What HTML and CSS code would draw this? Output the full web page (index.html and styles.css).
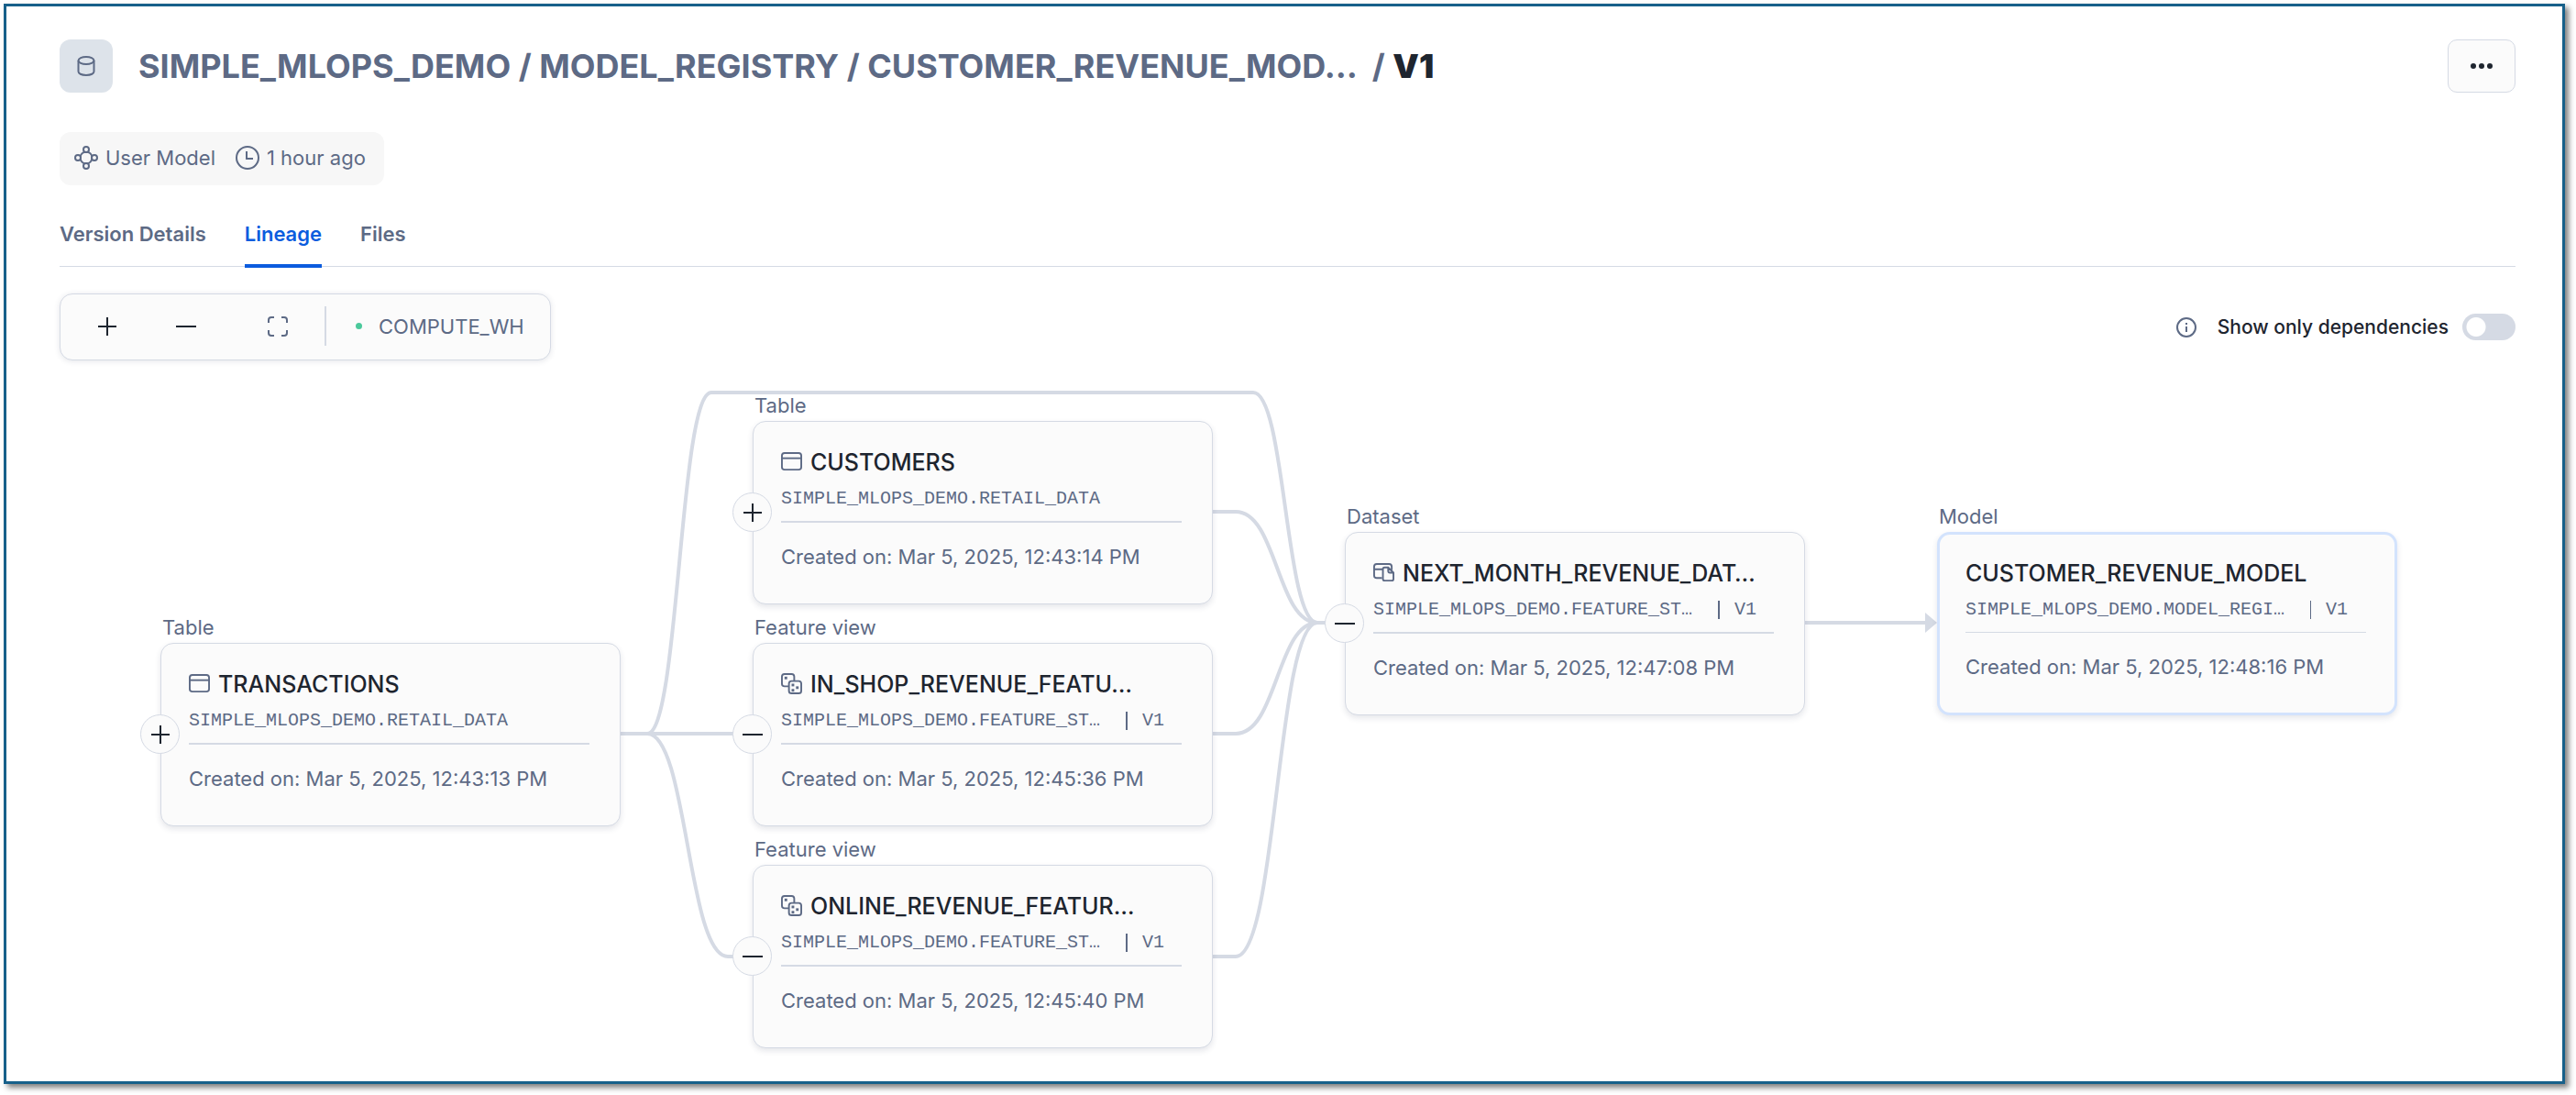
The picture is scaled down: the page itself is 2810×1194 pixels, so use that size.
FILE: index.html
```html
<!DOCTYPE html>
<html lang="en">
<head>
<meta charset="utf-8">
<title>Model registry - Lineage</title>
<link rel="stylesheet" href="styles.css">
</head>
<body>
<svg class="sprite" aria-hidden="true">
  <symbol id="i-table" viewBox="0 0 24 24"><rect x="1" y="2" width="22" height="19" rx="3"/><path d="M1 8h22"/></symbol>
  <symbol id="i-feature" viewBox="0 0 24 24"><path d="M9 15H4a3 3 0 0 1-3-3V4a3 3 0 0 1 3-3h8a3 3 0 0 1 3 3v5"/><rect x="9" y="9" width="14" height="14" rx="3"/><g class="solid"><rect x="4" y="4" width="3" height="3"/><rect x="12" y="12" width="3" height="3"/><rect x="17" y="15" width="3" height="3"/><rect x="12" y="18" width="3" height="3"/></g></symbol>
  <symbol id="i-dataset" viewBox="0 0 24 24"><path d="M10 18H4a3 3 0 0 1-3-3V5a3 3 0 0 1 3-3h14a3 3 0 0 1 3 3v4M1 8h10"/><path d="M13 6h4l6 6v7a2 2 0 0 1-2 2h-8a2 2 0 0 1-2-2V8a2 2 0 0 1 2-2zM17 6v4a2 2 0 0 0 2 2h4"/></symbol>
  <symbol id="i-plus" viewBox="0 0 24 24"><path d="M12 2v20M2 12h20"/></symbol>
  <symbol id="i-minus" viewBox="0 0 24 24"><path d="M1 12h22"/></symbol>
</svg>
<main class="frame">
  <header class="header">
    <span class="db-badge"><svg class="icon" viewBox="0 0 24 24"><ellipse cx="12" cy="6" rx="8.5" ry="4"/><path d="M3.500 6v12c0 2 3 4 8.500 4s8.500-2 8.500-4V6"/></svg></span>
    <h1 class="title"><span>SIMPLE_MLOPS_DEMO / MODEL_REGISTRY / CUSTOMER_REVENUE_MOD…</span><span>/ <b>V1</b></span></h1>
    <button class="more" type="button" aria-label="More actions"><svg viewBox="0 0 24 24"><circle cx="3" cy="12" r="3"/><circle cx="12" cy="12" r="3"/><circle cx="21" cy="12" r="3"/></svg></button>
  </header>
  <div class="meta">
    <span class="meta-item"><svg class="icon model" viewBox="0 0 26 26"><circle cx="13" cy="13" r="6.500"/><circle cx="13" cy="4" r="3"/><circle cx="13" cy="22" r="3"/><circle cx="4" cy="13" r="3"/><circle cx="22" cy="13" r="3"/></svg>User Model</span>
    <span class="meta-item"><svg class="icon" viewBox="0 0 26 26"><circle cx="13" cy="13" r="12"/><path d="M12 6v8h7"/></svg>1 hour ago</span>
  </div>
  <nav class="tabs">
    <a href="#details">Version Details</a>
    <a href="#lineage" class="active" aria-current="page">Lineage</a>
    <a href="#files">Files</a>
  </nav>
  <div class="controls">
    <div class="toolbar">
      <button type="button" aria-label="Zoom in"><svg class="icon"><use href="#i-plus"/></svg></button>
      <button type="button" aria-label="Zoom out"><svg class="icon"><use href="#i-minus"/></svg></button>
      <button type="button" class="fit" aria-label="Fit to screen"><svg class="icon" viewBox="0 0 24 24"><path d="M2 8V5a3 3 0 0 1 3-3h3M16 2h3a3 3 0 0 1 3 3v3M22 16v3a3 3 0 0 1-3 3h-3M8 22H5a3 3 0 0 1-3-3v-3"/></svg></button>
      <button type="button" class="warehouse"><i></i>COMPUTE_WH</button>
    </div>
    <label class="deps"><svg class="icon" viewBox="0 0 24 24"><circle cx="12" cy="12" r="10"/><path d="M12 11v6M12 7v2"/></svg>Show only dependencies<input type="checkbox" role="switch"></label>
  </div>
  <section class="canvas" aria-label="Lineage graph">
    <svg class="edges" viewBox="0 0 2679 789" aria-hidden="true">
      <path d="M612 407H641C676 407 676 35 711 35H1302C1337 35 1337 286 1372 286H1402"/>
      <path d="M612 407H756"/>
      <path d="M612 407H641C685 407 685 650 729 650H756"/>
      <path d="M1257 165H1283C1328 165 1328 286 1372 286"/>
      <path d="M1257 407H1283C1328 407 1328 286 1372 286"/>
      <path d="M1257 650H1283C1328 650 1328 286 1372 286"/>
      <path d="M1903 286H2040"/>
      <path class="arrow" d="M2035 275V297L2048 286Z"/>
    </svg>
    <article class="node n-transactions"><span class="kind">Table</span><div class="card">
      <h2><svg class="icon"><use href="#i-table"/></svg>TRANSACTIONS</h2>
      <p class="path">SIMPLE_MLOPS_DEMO.RETAIL_DATA</p><hr><p class="created">Created on: Mar 5, 2025, 12:43:13 PM</p>
      <button type="button" class="knob" aria-label="Expand"><svg class="icon"><use href="#i-plus"/></svg></button></div></article>
    <article class="node n-customers"><span class="kind">Table</span><div class="card">
      <h2><svg class="icon"><use href="#i-table"/></svg>CUSTOMERS</h2>
      <p class="path">SIMPLE_MLOPS_DEMO.RETAIL_DATA</p><hr><p class="created">Created on: Mar 5, 2025, 12:43:14 PM</p>
      <button type="button" class="knob" aria-label="Expand"><svg class="icon"><use href="#i-plus"/></svg></button></div></article>
    <article class="node n-inshop"><span class="kind">Feature view</span><div class="card">
      <h2><svg class="icon"><use href="#i-feature"/></svg>IN_SHOP_REVENUE_FEATU…</h2>
      <p class="path">SIMPLE_MLOPS_DEMO.FEATURE_ST…<span>V1</span></p><hr><p class="created">Created on: Mar 5, 2025, 12:45:36 PM</p>
      <button type="button" class="knob" aria-label="Collapse"><svg class="icon"><use href="#i-minus"/></svg></button></div></article>
    <article class="node n-online"><span class="kind">Feature view</span><div class="card">
      <h2><svg class="icon"><use href="#i-feature"/></svg>ONLINE_REVENUE_FEATUR…</h2>
      <p class="path">SIMPLE_MLOPS_DEMO.FEATURE_ST…<span>V1</span></p><hr><p class="created">Created on: Mar 5, 2025, 12:45:40 PM</p>
      <button type="button" class="knob" aria-label="Collapse"><svg class="icon"><use href="#i-minus"/></svg></button></div></article>
    <article class="node n-dataset"><span class="kind">Dataset</span><div class="card">
      <h2><svg class="icon"><use href="#i-dataset"/></svg>NEXT_MONTH_REVENUE_DAT…</h2>
      <p class="path">SIMPLE_MLOPS_DEMO.FEATURE_ST…<span>V1</span></p><hr><p class="created">Created on: Mar 5, 2025, 12:47:08 PM</p>
      <button type="button" class="knob" aria-label="Collapse"><svg class="icon"><use href="#i-minus"/></svg></button></div></article>
    <article class="node n-model"><span class="kind">Model</span><div class="card current">
      <h2>CUSTOMER_REVENUE_MODEL</h2>
      <p class="path">SIMPLE_MLOPS_DEMO.MODEL_REGI…<span>V1</span></p><hr><p class="created">Created on: Mar 5, 2025, 12:48:16 PM</p></div></article>
  </section>
</main>
</body>
</html>
```

FILE: styles.css
```css
:root {
  --ink: #1e252f;
  --muted: #5d6a85;
  --line: #d5dae4;
  --surface: #fbfbfb;
  --blue: #0b5cde;
}
* { box-sizing: border-box; }
body {
  margin: 0;
  padding: 4px 12px 12px 4px;
  background: #fff;
  color: var(--muted);
  font: 22px/28px Inter, "Liberation Sans", sans-serif;
}
h1, h2, p { margin: 0; }
button { font: inherit; color: inherit; background: none; border: 0; padding: 0; display: flex; align-items: center; justify-content: center; }
.sprite { position: absolute; width: 0; height: 0; }
.icon { width: 24px; height: 24px; flex: none; fill: none; stroke: currentColor; stroke-width: 2; }
.solid { fill: currentColor; stroke: none; }

.frame {
  min-height: calc(100vh - 16px);
  padding: 36px 51px 0 58px;
  border: 3px solid #17608a;
  box-shadow: 4px 4px 6px rgba(0, 0, 0, .5);
}

.header { display: flex; align-items: center; }
.db-badge { width: 58px; height: 58px; border-radius: 12px; background: #dde3ea; display: flex; align-items: center; justify-content: center; }
.title { flex: 1; display: flex; gap: 16px; margin-left: 28px; font-size: 36px; line-height: 44px; font-weight: 700; white-space: nowrap; }
.title b { color: var(--ink); }
.more { width: 74px; height: 58px; border: 1px solid var(--line); border-radius: 10px; background: var(--surface); }
.more svg { width: 24px; height: 24px; fill: var(--ink); }

.meta { width: fit-content; height: 58px; margin-top: 43px; padding: 0 20px 2px 16px; display: flex; align-items: center; gap: 22px; border-radius: 12px; background: #f7f7f7; }
.meta-item { display: flex; align-items: center; gap: 8px; }
.meta .icon { width: 26px; height: 26px; }
.meta .model { fill: #f7f7f7; }

.tabs { display: flex; gap: 42px; height: 89px; border-bottom: 1px solid var(--line); font-weight: 600; }
.tabs a { color: inherit; text-decoration: none; height: 90px; padding-top: 39px; border-bottom: 4px solid transparent; }
.tabs .active { color: var(--blue); border-color: var(--blue); }

.controls { display: flex; align-items: center; justify-content: space-between; margin-top: 29px; }
.toolbar { display: flex; align-items: center; height: 73px; padding: 0 28px 2px 36px; border: 1px solid var(--line); border-radius: 14px; background: var(--surface); box-shadow: 0 1px 6px rgba(40, 50, 80, .12); color: var(--ink); }
.toolbar button { width: 30px; height: 43px; margin-right: 56px; }
.toolbar .fit { color: var(--muted); margin: 0 36px 0 14px; }
.toolbar .warehouse { width: auto; margin: 0; padding-left: 32px; gap: 18px; border-left: 2px solid var(--line); color: var(--muted); }
.warehouse i { width: 7px; height: 7px; border-radius: 50%; background: #4bc99b; }
.deps { display: flex; align-items: center; color: var(--ink); font-size: 21px; font-weight: 500; }
.deps .icon { color: var(--muted); margin-right: 22px; }
.deps input { appearance: none; width: 58px; height: 29px; margin: 0 0 0 15px; border-radius: 15px; background: radial-gradient(circle at 15px 50%, #fff 10px, transparent 11px) var(--line); }

/* graph nodes are placed on a free canvas, edges are drawn below them */
.canvas { position: relative; height: 786px; }
.edges { position: absolute; left: 0; top: 0; width: 2679px; height: 789px; fill: none; stroke: var(--line); stroke-width: 4; }
.edges .arrow { fill: var(--line); stroke: none; }
.node { position: absolute; width: 502px; }
.n-transactions { left: 110px; top: 278px; }
.n-customers { left: 756px; top: 36px; }
.n-inshop { left: 756px; top: 278px; }
.n-online { left: 756px; top: 520px; }
.n-dataset { left: 1402px; top: 157px; }
.n-model { left: 2048px; top: 157px; }
.kind { display: block; padding-left: 2px; height: 30px; line-height: 26px; }
.card { position: relative; height: 200px; padding: 29px 33px 0 30px; border: 1px solid var(--line); border-radius: 14px; background: var(--surface); box-shadow: 0 3px 6px rgba(40, 50, 80, .12); }
.card h2 { display: flex; align-items: center; gap: 9px; color: var(--ink); font-size: 25px; line-height: 30px; font-weight: 500; white-space: nowrap; }
.card h2 .icon { width: 23px; height: 23px; margin-bottom: 2px; color: var(--muted); }
.path { display: flex; align-items: center; margin-top: 11px; font: 20px/28px "Liberation Mono", monospace; white-space: nowrap; }
.path span { margin-left: 28px; padding-left: 16px; border-left: 2px solid currentColor; line-height: 20px; }
.card hr { margin: 10px 0 0; border: 0; height: 2px; background: var(--line); }
.created { margin-top: 23px; }
.current { padding: 27px 31px 0 28px; border: 3px solid #d3e3fd; }
.current hr { height: 1px; }
.current .path span { border-left-width: 1px; }
.knob { position: absolute; left: -23px; top: 77px; width: 43px; height: 43px; border: 1px solid var(--line); border-radius: 50%; background: var(--surface); color: var(--ink); }
```
